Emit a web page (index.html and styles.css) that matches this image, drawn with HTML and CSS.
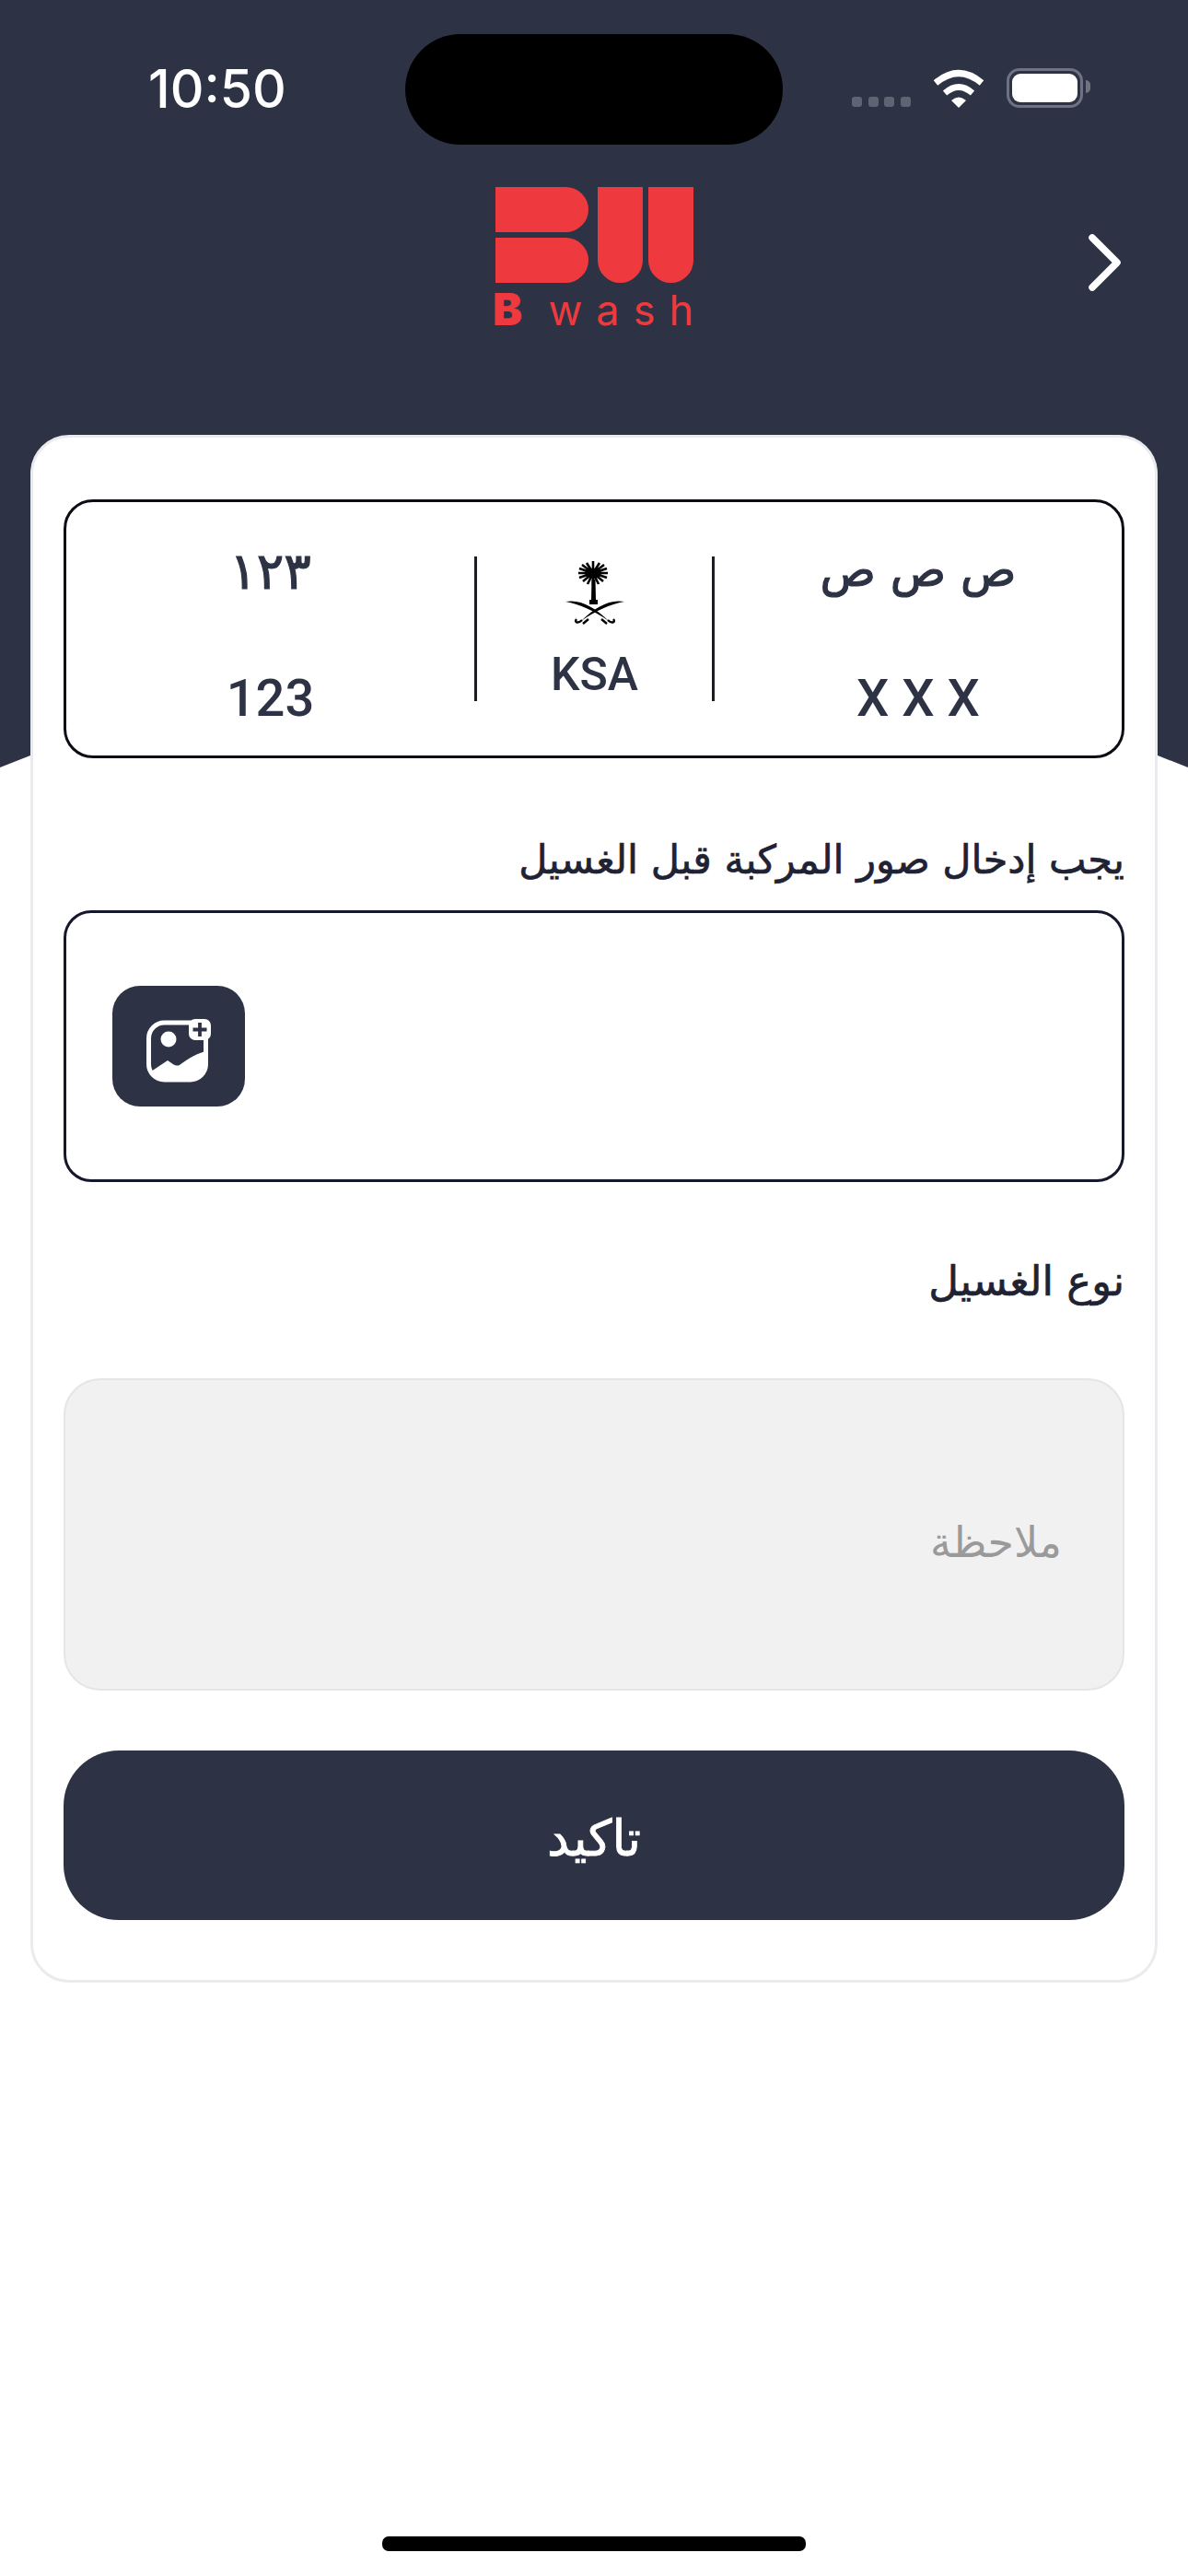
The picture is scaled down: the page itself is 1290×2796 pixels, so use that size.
FILE: index.html
```html
<!DOCTYPE html>
<html lang="ar">
<head>
  <meta charset="UTF-8">
  <meta name="viewport" content="width=device-width, initial-scale=1.0">
  <title>Bwash</title>
  <link rel="stylesheet" href="styles.css">
</head>
<body>

<div class="screen">
  <header class="hero">
    <div class="status-bar">
      <span class="time">10:50</span>
      <div class="island"></div>
      <div class="status-icons">
        <div class="signal"><i></i><i></i><i></i><i></i></div>
        <svg class="wifi" viewBox="0 0 56 42">
          <path d="M3 15Q28 -6 53 15" fill="none" stroke="#fff" stroke-width="7"/>
          <path d="M13 26Q28 13 43 26" fill="none" stroke="#fff" stroke-width="6.5"/>
          <path d="M20 34Q28 27 36 34L28 42Z" fill="#fff"/>
        </svg>
        <div class="battery"><div class="battery-fill"></div></div>
      </div>
    </div>

    <div class="brand-row">
      <div class="brand">
        <svg class="brand-mark" viewBox="0 0 215 104">
          <path d="M0 0H76A25 24.500 0 0 1 76 49H0Z" fill="#ee3a3e"/>
          <path d="M0 55H76A25 24.500 0 0 1 76 104H0Z" fill="#ee3a3e"/>
          <path d="M111 0H160V79.500A24.500 24.500 0 0 1 111 79.500Z" fill="#ee3a3e"/>
          <path d="M166 0H215V79.500A24.500 24.500 0 0 1 166 79.500Z" fill="#ee3a3e"/>
        </svg>
        <div class="brand-name"><b>B</b><span>wash</span></div>
      </div>
      <svg class="back" viewBox="0 0 36 64">
        <path d="M4 5L31 32L4 59" fill="none" stroke="#fff" stroke-width="7.500" stroke-linecap="round" stroke-linejoin="round"/>
      </svg>
    </div>
  </header>

  <main class="card">
    <div class="plate">
      <div class="plate-col numbers">
        <span class="plate-ar digits">١٢٣</span>
        <span class="plate-en">123</span>
      </div>
      <div class="plate-mid">
        <svg class="emblem" viewBox="0 0 64 70">
          <path d="M30 13L46 13M30 13L45 8M30 13L42 4M30 13L37 2M30 13L30 0M30 13L23 2M30 13L18 4M30 13L15 8M30 13L14 13M30 13L15 18M30 13L19 22M30 13L24 25M30 13L30 26M30 13L36 25M30 13L41 22M30 13L45 18" stroke="#000" stroke-width="2.600" fill="none"/>
          <path d="M28.500 20H32.500L33 42H35V47H26V42H28Z" fill="#000"/>
          <path d="M0 44C16 41 32 50 47 65C31 54 16 47 0 44Z" fill="#000"/>
          <path d="M64 44C48 41 32 50 17 65C33 54 48 47 64 44Z" fill="#000"/>
          <path d="M46 64C50 68 55 67 52 63M18 64C14 68 9 67 12 63M39 63L45 68M25 63L19 68" stroke="#000" stroke-width="2.400" fill="none"/>
        </svg>
        <span class="plate-ksa">KSA</span>
      </div>
      <div class="plate-col letters">
        <span class="plate-ar">ص ص ص</span>
        <span class="plate-en">X X X</span>
      </div>
    </div>

    <h3 class="field-label first" dir="rtl">يجب إدخال صور المركبة قبل الغسيل</h3>
    <div class="upload-box">
      <button class="upload-btn">
        <svg class="upload-icon" viewBox="0 0 70 69">
          <rect x="2.500" y="4" width="62" height="62" rx="17" fill="none" stroke="#fff" stroke-width="5"/>
          <circle cx="24" cy="22" r="8.500" fill="#fff"/>
          <path d="M5 57L23 45C28 48 31 52 36 50C42 46 50 39 64 35V50C64 60 58 66 48 66H20C12 66 7 62 5 57Z" fill="#fff"/>
          <rect x="46" y="0" width="24" height="23" rx="7" fill="#fff"/>
          <path d="M58 4V19M50.500 11.500H65.500" stroke="#2d3344" stroke-width="3.800"/>
        </svg>
      </button>
    </div>

    <h3 class="field-label second" dir="rtl">نوع الغسيل</h3>
    <div class="note-box" dir="rtl">ملاحظة</div>
    <button class="submit">تاكيد</button>
  </main>

  <div class="home-bar"></div>
</div>

</body>
</html>
```

FILE: styles.css
```css
body {
  margin: 0;
  padding: 0;
  background-color: #ffffff;
  font-family: "DejaVu Sans", sans-serif;
  color: #2d3344;
}

.screen {
  display: flex;
  flex-direction: column;
  height: 2796px;
  overflow: hidden;
}

.hero {
  height: 833px;
  flex-shrink: 0;
  box-sizing: border-box;
  padding-top: 37px;
  background-color: #2d3344;
  clip-path: polygon(0 0, 100% 0, 100% 100%, 1257px 820px, 33px 820px, 0 100%);
}

.status-bar {
  display: flex;
  align-items: flex-start;
  height: 120px;
}

.time {
  width: 147px;
  margin: 35px 132px 0 161px;
  font-family: Inter, sans-serif;
  font-size: 57px;
  font-weight: 500;
  line-height: 50px;
  color: #ffffff;
}

.island {
  width: 410px;
  height: 120px;
  border-radius: 60px;
  background-color: #000000;
}

.status-icons {
  position: relative;
  display: flex;
  align-items: flex-end;
  height: 43px;
  margin: 37px 0 0 75px;
}

.signal {
  display: flex;
  gap: 6.500px;
  margin-bottom: 1px;
}

.signal i {
  width: 11px;
  height: 11px;
  border-radius: 3px;
  background-color: #5f6473;
}

.wifi {
  width: 56px;
  height: 42px;
  margin-left: 24px;
}

.battery {
  position: relative;
  box-sizing: border-box;
  width: 83px;
  height: 43px;
  margin-left: 24px;
  padding: 3px;
  border: 3px solid #6e7281;
  border-radius: 14px;
}

.battery::after {
  content: "";
  position: absolute;
  top: 10px;
  right: -11px;
  width: 5px;
  height: 14px;
  border-radius: 0 6px 6px 0;
  background-color: #6e7281;
}

.battery-fill {
  height: 100%;
  border-radius: 9px;
  background-color: #ffffff;
}

.brand-row {
  display: flex;
  align-items: flex-start;
  margin-top: 46px;
}

.brand {
  width: 215px;
  margin-left: 538px;
}

.brand-mark {
  display: block;
  width: 215px;
  height: 104px;
}

.brand-name {
  display: flex;
  justify-content: space-between;
  align-items: baseline;
  margin-top: 4px;
  font-family: Inter, sans-serif;
  font-size: 45px;
  line-height: 50px;
  color: #ee3a3e;
}

.brand-name b {
  margin-left: -3px;
  font-size: 48px;
  font-weight: 900;
}

.brand-name span {
  letter-spacing: 15px;
  margin-right: -15px;
}

.back {
  width: 36px;
  height: 64px;
  margin: 50px 0 0 429px;
}

.card {
  position: relative;
  box-sizing: border-box;
  height: 1680px;
  flex-shrink: 0;
  margin: -361px 33px 0;
  padding: 67px 33px 0;
  border: 3px solid #e9ebee;
  border-radius: 42px;
  background-color: #ffffff;
}

.plate {
  display: grid;
  grid-template-columns: 443px 261px 1fr;
  box-sizing: border-box;
  height: 281px;
  border: 3px solid #0c0d14;
  border-radius: 32px;
}

.plate-col {
  display: flex;
  flex-direction: column;
  align-items: center;
  justify-content: space-between;
  padding: 40px 0 32px;
}

.plate-ar {
  font-size: 50px;
  line-height: 60px;
  font-weight: 500;
  letter-spacing: 2px;
  margin-top: 4px;
  -webkit-text-stroke: 1.2px #2d3344;
}

.plate-ar.digits {
  font-size: 55px;
  margin-top: 5px;
}

.plate-en {
  font-family: Roboto, sans-serif;
  font-size: 56px;
  line-height: 60px;
  font-weight: 500;
}

.plate-mid {
  display: flex;
  flex-direction: column;
  align-items: center;
  height: 157px;
  margin-top: 59px;
  border-left: 3px solid #1a1c26;
  border-right: 3px solid #1a1c26;
}

.emblem {
  width: 64px;
  height: 70px;
  margin-top: 5px;
}

.plate-ksa {
  font-family: Roboto, sans-serif;
  font-size: 50px;
  line-height: 50px;
  font-weight: 500;
  margin-top: 28px;
}

.field-label {
  margin: 0;
  font-size: 43px;
  font-weight: 500;
  line-height: 60px;
  color: #1f2233;
  -webkit-text-stroke: 0.7px #1f2233;
}

.field-label.first {
  margin-top: 80px;
}

.field-label.second {
  margin-top: 78px;
  font-size: 45px;
}

.upload-box {
  box-sizing: border-box;
  height: 295px;
  margin-top: 25px;
  padding: 79px 0 0 50px;
  border: 3px solid #15172b;
  border-radius: 30px;
}

.upload-btn {
  display: flex;
  align-items: center;
  justify-content: center;
  width: 144px;
  height: 131px;
  padding: 0;
  border: none;
  border-radius: 30px;
  background-color: #2d3344;
}

.upload-icon {
  width: 70px;
  height: 69px;
  margin-top: 10px;
}

.note-box {
  box-sizing: border-box;
  height: 339px;
  margin-top: 75px;
  padding: 146px 66px 0 0;
  border: 2px solid #e5e5e5;
  border-radius: 40px;
  background-color: #f1f1f1;
  font-size: 46px;
  line-height: 60px;
  color: #9a9a9a;
}

.submit {
  display: block;
  box-sizing: border-box;
  width: 100%;
  height: 184px;
  margin-top: 65px;
  padding: 6px 0 0;
  border: none;
  border-radius: 60px;
  background-color: #2d3344;
  font-family: "DejaVu Sans", sans-serif;
  font-size: 54px;
  font-weight: 500;
  color: #ffffff;
  -webkit-text-stroke: 0.8px #ffffff;
}

.home-bar {
  flex-shrink: 0;
  width: 460px;
  height: 16px;
  margin: auto auto 27px;
  border-radius: 7px;
  background-color: #000000;
}
```
